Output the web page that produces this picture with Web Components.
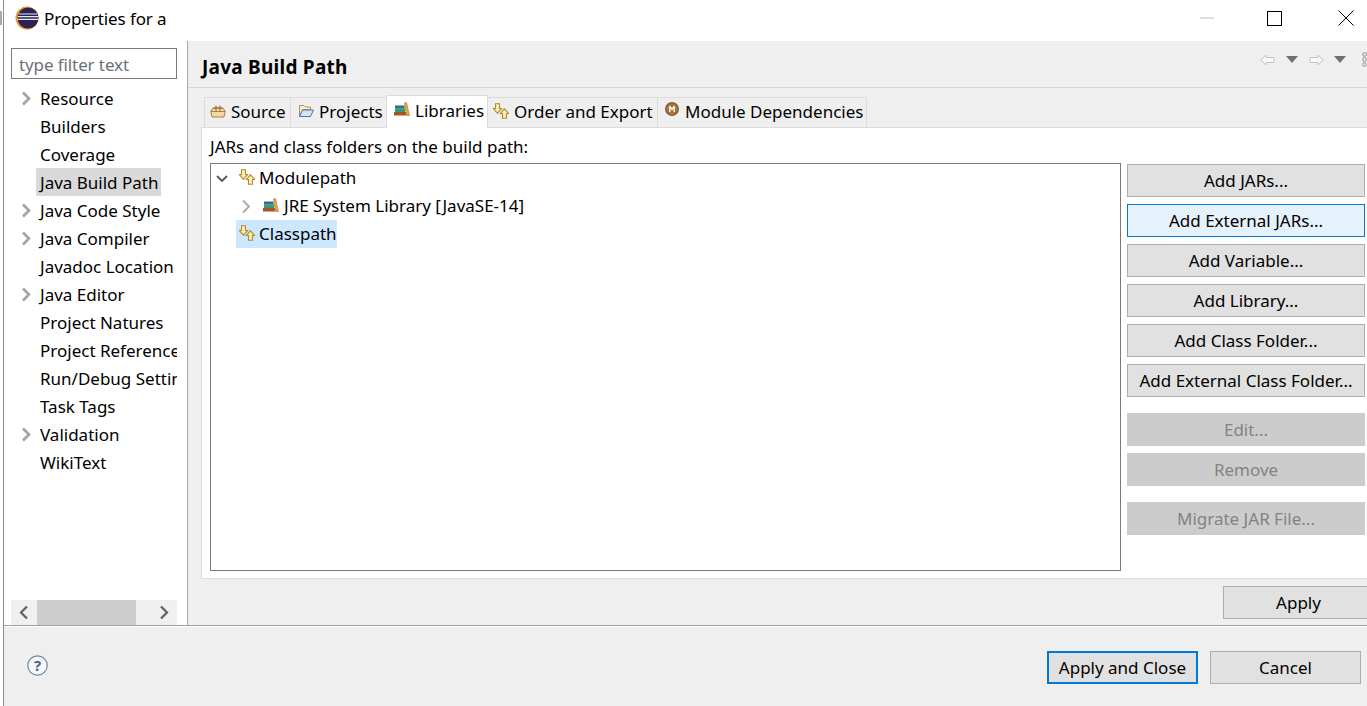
<!DOCTYPE html>
<html>
<head>
<meta charset="utf-8">
<title>Properties</title>
<style>
  html, body { margin: 0; padding: 0; background: #fff; overflow: hidden; }
  body { font-family: "Noto Sans", "Liberation Sans", sans-serif; font-size: 17px; color: #000; }
</style>
</head>
<body>
<prefs-dialog>
  <title-bar slot="title" label="Properties for a"></title-bar>

  <nav-tree slot="nav">
    <nav-item twisty>Resource</nav-item>
    <nav-item>Builders</nav-item>
    <nav-item>Coverage</nav-item>
    <nav-item selected>Java Build Path</nav-item>
    <nav-item twisty>Java Code Style</nav-item>
    <nav-item twisty>Java Compiler</nav-item>
    <nav-item>Javadoc Location</nav-item>
    <nav-item twisty>Java Editor</nav-item>
    <nav-item>Project Natures</nav-item>
    <nav-item>Project References</nav-item>
    <nav-item>Run/Debug Settings</nav-item>
    <nav-item>Task Tags</nav-item>
    <nav-item twisty>Validation</nav-item>
    <nav-item>WikiText</nav-item>
  </nav-tree>

  <page-header slot="main" heading="Java Build Path"></page-header>

  <tab-strip slot="main">
    <tab-item icon="source" style="width:87px">Source</tab-item>
    <tab-item icon="folder" style="width:97px">Projects</tab-item>
    <tab-item icon="books" style="width:102px" active>Libraries</tab-item>
    <tab-item icon="order" style="width:171px">Order and Export</tab-item>
    <tab-item icon="module" style="width:210px">Module Dependencies</tab-item>
  </tab-strip>

  <libraries-pane slot="main">
    <tree-row slot="tree" twisty="open" icon="order">Modulepath</tree-row>
    <tree-row slot="tree" level="1" twisty="closed" icon="books">JRE System Library [JavaSE-14]</tree-row>
    <tree-row slot="tree" icon="order" selected>Classpath</tree-row>

    <dlg-button slot="actions" block>Add JARs...</dlg-button>
    <dlg-button slot="actions" block hot>Add External JARs...</dlg-button>
    <dlg-button slot="actions" block>Add Variable...</dlg-button>
    <dlg-button slot="actions" block>Add Library...</dlg-button>
    <dlg-button slot="actions" block>Add Class Folder...</dlg-button>
    <dlg-button slot="actions" block>Add External Class Folder...</dlg-button>
    <dlg-button slot="actions" block disabled class="sep">Edit...</dlg-button>
    <dlg-button slot="actions" block disabled>Remove</dlg-button>
    <dlg-button slot="actions" block disabled class="sep">Migrate JAR File...</dlg-button>
  </libraries-pane>

  <apply-row slot="main"></apply-row>

  <dialog-footer slot="footer"></dialog-footer>
</prefs-dialog>

<script>
const ICONS = {
  source: `<path d="M.8 8.500 3 5h10l2.200 3.500-1.200 5.500H2z" fill="#f3d9a4" stroke="#b07f3e"/><path d="M1 8.500h14" stroke="#b07f3e"/><path d="M6 2.500V8M10 2.500V8M3.500 5h9" stroke="#8a6a34"/>`,
  folder: `<path d="M1.500 2.500h4.500l1.500 1.500h5v2.500H5L1.500 13z" fill="#fdf0c4" stroke="#a8945c"/><path d="M1.500 13.500 4.500 7h11l-3 6.500z" fill="#d6e4f6" stroke="#4f76a8"/>`,
  books: `<rect x="0" y="11" width="12" height="3.500" fill="#a8552c"/><rect x="1" y="7.500" width="10" height="3.500" fill="#3a9a6e"/><rect x="1" y="4.500" width="9.500" height="3" fill="#2f6a96"/><path d="M10.500 2 12.500 1.500 15.500 14.500h-3z" fill="#eaa93a" stroke="#a8742a" stroke-width=".6"/>`,
  order: `<path d="M2.500.800h4v4.700h2.200L4.500 10.200.3 5.500h2.200z" fill="#fdeeb4" stroke="#b08a2c" stroke-width="1.100"/><path d="M11.500 5.800l4.200 4.700h-2.200v4.700h-4v-4.700H7.300z" fill="#fdeeb4" stroke="#b08a2c" stroke-width="1.100"/>`,
  module: `<circle cx="8" cy="7" r="7" fill="#8a5f32"/><circle cx="8" cy="7" r="5.500" fill="#a5773f"/><path d="M5 10V4h1.500L8 6l1.500-2H11v6H9.500V6.800L8 8.500 6.500 6.800V10z" fill="#f4ece0"/>`
};

function icon(name) {
  return `<svg width="16" height="16" viewBox="0 0 16 16" aria-hidden="true">${ICONS[name] || ''}</svg>`;
}

function chevron(dir, color, w) {
  const d = dir === 'down' ? 'M2 5l5 5 5-5' : dir === 'left' ? 'M10 1.500 4 7.500l6 6' : 'M4 1.500l6 6-6 6';
  return `<svg width="14" height="15" viewBox="0 0 14 15" aria-hidden="true"><path d="${d}" fill="none" stroke="${color}" stroke-width="${w}"/></svg>`;
}

class PrefsDialog extends HTMLElement {
  connectedCallback() {
    this.attachShadow({ mode: 'open' });
    this.shadowRoot.innerHTML = `
      <style>
        :host {
          display: grid;
          width: 1367px;
          height: 706px;
          grid-template-columns: 3px 1px 183px 1px 1fr;
          grid-template-rows: 41px 584px 1px 1px 1fr;
          overflow: hidden;
          background: #fff;
        }
        .behind { grid-column: 1; grid-row: 1; padding-top: 11px; box-sizing: border-box; }
        .behind span { display: block; width: 2px; height: 14px; background: #a9a9a9; }
        .edge { grid-column: 2; grid-row: 1 / -1; background: #8c8c8c; }
        .title { grid-column: 3 / -1; grid-row: 1; min-width: 0; }
        .nav { grid-column: 3; grid-row: 2; min-height: 0; display: block; }
        .split { grid-column: 4; grid-row: 2; background: #a8a8a8; }
        .main { grid-column: 5; grid-row: 2; background: #efefef; display: flex; flex-direction: column; min-width: 0; }
        .rule { grid-column: 3 / -1; grid-row: 3; background: #a0a0a0; }
        .foot { grid-column: 3 / -1; grid-row: 5; background: #efefef; min-width: 0; }
      </style>
      <div class="behind"><span></span></div>
      <div class="edge"></div>
      <div class="title"><slot name="title"></slot></div>
      <div class="nav"><slot name="nav"></slot></div>
      <div class="split"></div>
      <div class="main"><slot name="main"></slot></div>
      <div class="rule"></div>
      <div class="foot"><slot name="footer"></slot></div>
    `;
  }
}

class TitleBar extends HTMLElement {
  connectedCallback() {
    this.attachShadow({ mode: 'open' });
    this.shadowRoot.innerHTML = `
      <style>
        :host { display: flex; align-items: center; height: 41px; padding: 0 0 5px 11px; margin-right: -14px; box-sizing: border-box; }
        .logo { display: block; margin-right: 5px; }
        .label { flex: 1; font-size: 17px; letter-spacing: -.1px; white-space: nowrap; }
        .btn { width: 71px; display: flex; justify-content: center; }
        .btn svg { display: block; }
        .min svg { margin-left: 6px; }
      </style>
      <svg class="logo" width="24" height="24" viewBox="0 0 24 24" aria-hidden="true">
        <circle cx="12" cy="12" r="11.500" fill="#f29a2e"/>
        <circle cx="13" cy="12" r="10.500" fill="#2c2255"/>
        <path d="M3.600 8h18.800M2.800 10.700h20.400M2.600 13.300h20.800" stroke="#e8e8f2" stroke-width="1.200"/>
      </svg>
      <span class="label">${this.getAttribute('label')}</span>
      <div class="btn min"><svg width="14" height="2" viewBox="0 0 14 2"><path d="M0 1h14" stroke="#bdbdbd"/></svg></div>
      <div class="btn"><svg width="15" height="15" viewBox="0 0 15 15"><rect x=".5" y=".5" width="14" height="14" fill="none" stroke="#000"/></svg></div>
      <div class="btn"><svg width="16" height="16" viewBox="0 0 16 16"><path d="M.5.500l15 15M15.500.500l-15 15" stroke="#000"/></svg></div>
    `;
  }
}

class NavTree extends HTMLElement {
  connectedCallback() {
    this.attachShadow({ mode: 'open' });
    this.shadowRoot.innerHTML = `
      <style>
        :host { display: flex; flex-direction: column; height: 584px; padding: 7px 10px 0 7px; box-sizing: border-box; }
        input {
          display: block;
          width: 166px;
          height: 31px;
          box-sizing: border-box;
          margin: 0 0 5px;
          border: 1px solid #7a7a7a;
          padding: 1px 7px 0;
          font: inherit;
          font-size: 17px;
          letter-spacing: -.1px;
          outline: none;
          background: #fff;
        }
        input::placeholder { color: #6b7178; opacity: 1; }
        .list { flex: 1; overflow: hidden; min-height: 0; width: 166px; }
        .bar { display: flex; align-items: center; width: 166px; height: 25px; background: #f0f0f0; }
        .arrow { width: 26px; display: flex; justify-content: center; }
        .track { flex: 1; height: 100%; }
        .thumb { display: block; width: 99px; height: 100%; background: #cdcdcd; }
        svg { display: block; }
      </style>
      <input placeholder="type filter text" value="">
      <div class="list"><slot></slot></div>
      <div class="bar">
        <div class="arrow">${chevron('left', '#606060', 2.2)}</div>
        <div class="track"><span class="thumb"></span></div>
        <div class="arrow">${chevron('right', '#606060', 2.2)}</div>
      </div>
    `;
  }
}

class NavItem extends HTMLElement {
  connectedCallback() {
    this.attachShadow({ mode: 'open' });
    const tw = this.hasAttribute('twisty') ? chevron('right', '#a3a3a3', 2.6) : '';
    this.shadowRoot.innerHTML = `
      <style>
        :host { display: flex; align-items: center; height: 28px; white-space: nowrap; }
        .tw { flex: none; width: 25px; padding-left: 8px; box-sizing: border-box; display: flex; }
        .txt { padding: 0 3px 0 4px; height: 28px; line-height: 30px; flex: none; }
        :host([selected]) .txt { background: #d9d9d9; }
        svg { display: block; }
      </style>
      <span class="tw">${tw}</span><span class="txt"><slot></slot></span>
    `;
  }
}

class PageHeader extends HTMLElement {
  connectedCallback() {
    this.attachShadow({ mode: 'open' });
    this.shadowRoot.innerHTML = `
      <style>
        :host {
          display: flex;
          align-items: center;
          height: 47px;
          box-sizing: border-box;
          padding: 6px 0 0 14px;
          border-bottom: 1px solid #d6d6d6;
        }
        h1 { flex: 1; margin: 0; font-size: 19px; font-weight: 700; letter-spacing: .25px; }
        .tools { display: flex; align-items: center; margin: -15px 0 0; }
        svg { display: block; }
        .back { margin-right: 11px; }
        .drop { margin-right: 11px; }
        .fwd { margin-right: 10px; }
        .drop.last { margin-right: 16px; }
      </style>
      <h1>${this.getAttribute('heading')}</h1>
      <div class="tools">
        <svg class="back" width="15" height="12" viewBox="0 0 15 12"><path d="M.8 6 6 1v2.500h8v5H6V11z" fill="#f6f6f6" stroke="#c4c4c4"/></svg>
        <svg class="drop" width="12" height="7" viewBox="0 0 12 7"><path d="M0 0h12L6 7z" fill="#6f6f78"/></svg>
        <svg class="fwd" width="15" height="12" viewBox="0 0 15 12"><path d="M14.200 6 9 1v2.500H1v5h8V11z" fill="#f6f6f6" stroke="#c4c4c4"/></svg>
        <svg class="drop last" width="12" height="7" viewBox="0 0 12 7"><path d="M0 0h12L6 7z" fill="#6f6f78"/></svg>
        <svg width="5" height="15" viewBox="0 0 5 15"><g fill="none" stroke="#8a8a8a"><circle cx="2.500" cy="2.500" r="1.800"/><circle cx="2.500" cy="7.500" r="1.800"/><circle cx="2.500" cy="12.500" r="1.800"/></g></svg>
      </div>
    `;
  }
}

class TabStrip extends HTMLElement {
  connectedCallback() {
    this.attachShadow({ mode: 'open' });
    this.shadowRoot.innerHTML = `
      <style>
        :host { display: flex; align-items: flex-end; height: 39px; padding-left: 16px; box-sizing: border-box; }
      </style>
      <slot></slot>
    `;
  }
}

class TabItem extends HTMLElement {
  connectedCallback() {
    this.attachShadow({ mode: 'open' });
    const name = this.getAttribute('icon');
    const left = { source: 5, folder: 7, books: 7, order: 5, module: 6 }[name];
    const gap = { source: 5, folder: 5, books: 5, order: 5, module: 5 }[name];
    this.shadowRoot.innerHTML = `
      <style>
        :host {
          display: flex;
          align-items: center;
          flex: none;
          height: 30px;
          box-sizing: border-box;
          padding: 0 0 2px ${left}px;
          border: 1px solid #dcdcdc;
          border-bottom: 0;
          margin-right: -1px;
          white-space: nowrap;
        }
        :host([active]) {
          height: 33px;
          background: #fff;
          padding-bottom: 3px;
          margin-bottom: -1px;
          position: relative;
          z-index: 1;
        }
        svg { display: block; margin: -2px ${gap}px 0 0; flex: none; }
        :host([active]) svg { margin-top: -4px; }
        :host([icon="module"]) svg { margin-top: -4px; }
      </style>
      ${icon(name)}<slot></slot>
    `;
  }
}

class LibrariesPane extends HTMLElement {
  connectedCallback() {
    this.attachShadow({ mode: 'open' });
    this.shadowRoot.innerHTML = `
      <style>
        :host {
          display: block;
          height: 452px;
          box-sizing: border-box;
          margin-left: 13px;
          padding: 0 0 0 8px;
          background: #fff;
          border: 1px solid #dcdcdc;
          border-right: 0;
        }
        .caption { height: 35px; line-height: 38px; white-space: nowrap; }
        .row { display: flex; gap: 6px; align-items: flex-start; }
        .tree {
          width: 911px;
          height: 408px;
          box-sizing: border-box;
          border: 1px solid #7a7a7a;
          background: #fff;
        }
        .actions { display: flex; flex-direction: column; gap: 7px; width: 238px; padding-top: 1px; }
        ::slotted(.sep) { margin-top: 9px; }
      </style>
      <div class="caption">JARs and class folders on the build path:</div>
      <div class="row">
        <div class="tree"><slot name="tree"></slot></div>
        <div class="actions"><slot name="actions"></slot></div>
      </div>
    `;
  }
}

class TreeRow extends HTMLElement {
  connectedCallback() {
    this.attachShadow({ mode: 'open' });
    const level = Number(this.getAttribute('level') || 0);
    const tw = this.getAttribute('twisty');
    const mark = tw === 'open' ? chevron('down', '#555', 1.8) : tw === 'closed' ? chevron('right', '#a8a8a8', 1.8) : '';
    this.shadowRoot.innerHTML = `
      <style>
        :host {
          display: flex;
          align-items: center;
          height: 28px;
          padding-left: ${level ? 28 : 4}px;
          white-space: nowrap;
        }
        .tw { width: 21px; padding-right: 7px; box-sizing: border-box; flex: none; display: flex; justify-content: center; }
        .cell { display: flex; align-items: center; height: 28px; box-sizing: border-box; padding: 0 0 2px 3px; }
        :host([selected]) .cell { background: #cce8ff; }
        svg { display: block; }
        .ic { margin-right: ${level ? 5 : 4}px; }
      </style>
      <span class="tw">${mark}</span>
      <span class="cell"><span class="ic">${icon(this.getAttribute('icon'))}</span><slot></slot></span>
    `;
  }
}

class DlgButton extends HTMLElement {
  connectedCallback() {
    this.attachShadow({ mode: 'open' });
    this.shadowRoot.innerHTML = `
      <style>
        :host {
          display: flex;
          align-items: center;
          justify-content: center;
          height: 33px;
          box-sizing: border-box;
          background: #e1e1e1;
          border: 1px solid #adadad;
          white-space: nowrap;
        }
        :host([hot]) { background: #e5f1fb; border-color: #0078d7; }
        :host([disabled]) { background: #cccccc; border-color: #cccccc; color: #838383; }
        :host([default]) { border: 2px solid #0078d7; }
      </style>
      <slot></slot>
    `;
  }
}

class ApplyRow extends HTMLElement {
  connectedCallback() {
    this.attachShadow({ mode: 'open' });
    this.shadowRoot.innerHTML = `
      <style>
        :host { display: flex; justify-content: flex-end; padding-top: 7px; }
        dlg-button { width: 151px; margin-right: -7px; }
      </style>
      <dlg-button>Apply</dlg-button>
    `;
  }
}

class DialogFooter extends HTMLElement {
  connectedCallback() {
    this.attachShadow({ mode: 'open' });
    this.shadowRoot.innerHTML = `
      <style>
        :host { display: flex; align-items: flex-start; padding: 24px 6px 0 23px; }
        .help { flex: 1; padding-top: 4px; }
        svg { display: block; }
        dlg-button { width: 151px; }
        .gap { width: 12px; }
        text { font-family: "Noto Sans", sans-serif; font-size: 15px; font-weight: 700; fill: #4a6488; }
      </style>
      <div class="help">
        <svg width="21" height="21" viewBox="0 0 21 21">
          <circle cx="10.500" cy="10.500" r="9.700" fill="#f6f8fb" stroke="#6f87a8" stroke-width="1.200"/>
          <text x="10.500" y="16" text-anchor="middle">?</text>
        </svg>
      </div>
      <dlg-button default>Apply and Close</dlg-button>
      <div class="gap"></div>
      <dlg-button>Cancel</dlg-button>
    `;
  }
}

customElements.define('prefs-dialog', PrefsDialog);
customElements.define('title-bar', TitleBar);
customElements.define('nav-tree', NavTree);
customElements.define('nav-item', NavItem);
customElements.define('page-header', PageHeader);
customElements.define('tab-strip', TabStrip);
customElements.define('tab-item', TabItem);
customElements.define('libraries-pane', LibrariesPane);
customElements.define('tree-row', TreeRow);
customElements.define('dlg-button', DlgButton);
customElements.define('apply-row', ApplyRow);
customElements.define('dialog-footer', DialogFooter);
</script>
</body>
</html>
